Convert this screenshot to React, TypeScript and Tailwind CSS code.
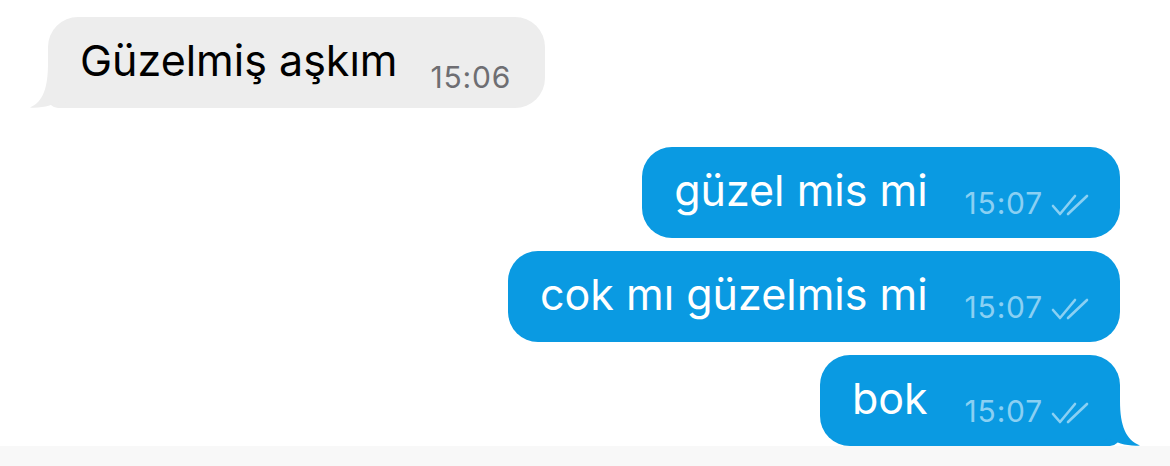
import React from "react";

const font = { fontFamily: "Inter, 'Noto Sans', sans-serif" };

function Checks() {
  return (
    <svg width="40" height="24" viewBox="0 0 40 24" fill="none" className="ml-[7px] mb-[1px]">
      <path d="M3 13 L10 21 L25 3" stroke="#8ad0f3" strokeWidth="2.6" strokeLinecap="round" strokeLinejoin="round" />
      <path d="M18 21 L37 3" stroke="#8ad0f3" strokeWidth="2.6" strokeLinecap="round" strokeLinejoin="round" />
    </svg>
  );
}

function LeftTail() {
  return (
    <svg width="50" height="50" viewBox="0 0 50 50" className="absolute left-[-18px] bottom-0">
      <path d="M18 5 C18 30 13 44 0 49.5 C12 50.5 24 47 32 42 C38 46 44 49 50 50 L50 0 L18 0 Z" fill="#ededed" />
    </svg>
  );
}

function RightTail() {
  return (
    <svg width="50" height="50" viewBox="0 0 50 50" className="absolute right-[-20px] bottom-0">
      <path d="M30 5 C30 30 36 44 50 49.5 C38 50.5 26 47 18 42 C12 46 6 49 0 50 L0 0 L30 0 Z" fill="#0a9ae2" />
    </svg>
  );
}

function Blue({ text, tail }: { text: string; tail?: boolean }) {
  return (
    <div className={`relative flex h-[91px] bg-[#0a9ae2] pl-[32px] pr-[30px] rounded-[30px] ${tail ? "rounded-br-[10px]" : ""}`}>
      <span className="mt-[22px] text-[43px] leading-[42px] text-white whitespace-nowrap">{text}</span>
      <div className="flex items-end ml-[37px] mb-[20px]">
        <span className="text-[30px] leading-[30px] tracking-[0.8px] text-[#8ad0f3]">15:07</span>
        <Checks />
      </div>
      {tail && <RightTail />}
    </div>
  );
}

export default function App() {
  return (
    <div className="w-[1170px] h-[466px] bg-white flex flex-col overflow-hidden" style={font}>
      <div className="flex pl-[48px] pt-[17px]">
        <div className="relative flex h-[91px] bg-[#ededed] pl-[32px] pr-[34px] rounded-[30px] rounded-bl-[10px]">
          <span className="mt-[22px] text-[43px] leading-[42px] text-black whitespace-nowrap">Güzelmiş aşkım</span>
          <span className="mt-[45px] ml-[33px] text-[30px] leading-[30px] tracking-[0.8px] text-[#6e6e72]">15:06</span>
          <LeftTail />
        </div>
      </div>
      <div className="flex flex-col items-end gap-[13px] pr-[50px] mt-[39px]">
        <Blue text="güzel mis mi" />
        <Blue text="cok mı güzelmis mi" />
        <Blue text="bok" tail />
      </div>
      <div className="h-[20px] bg-[#f8f8f8]" />
    </div>
  );
}
